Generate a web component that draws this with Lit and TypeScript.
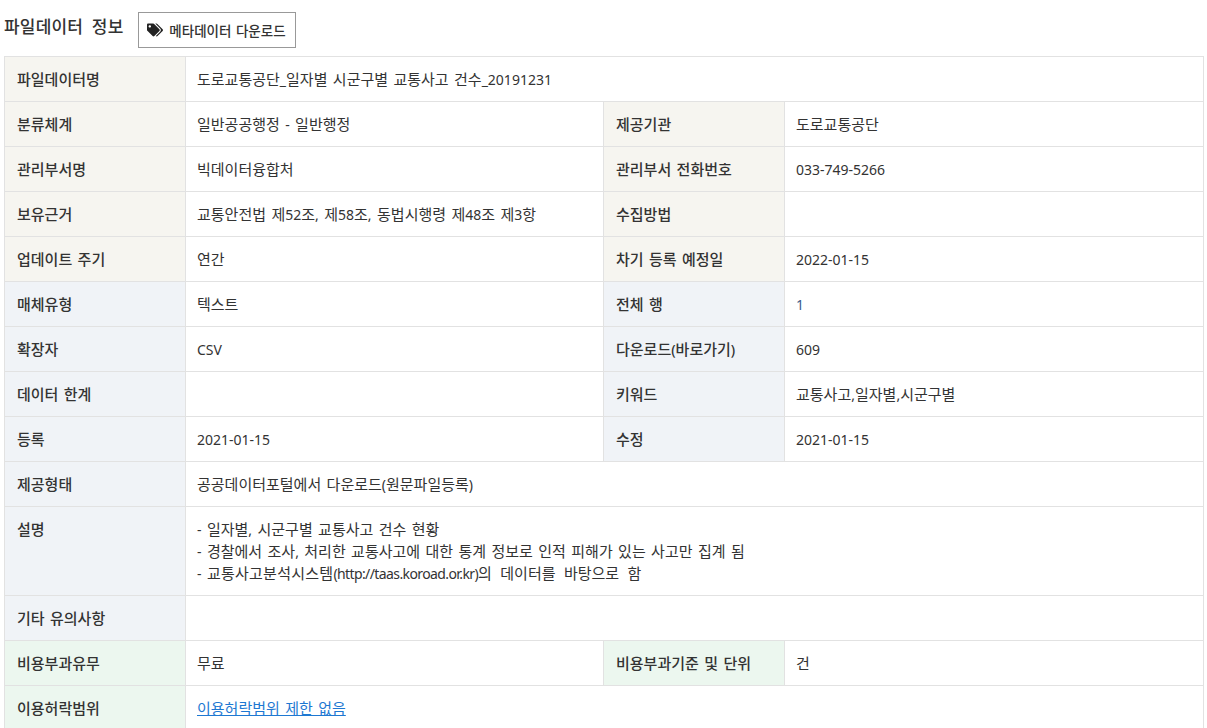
import { LitElement, html, css } from "lit";
import { customElement } from "lit/decorators.js";

type Cell = { k: string; v?: string; k2?: string; v2?: string; c: string; blue2?: boolean };

/* Korean glyphs run about 1px larger than the Latin ones in the reference, so Latin runs get their own span. */
const t = (s: string) =>
  s.split(/([A-Za-z0-9:\/._,()\-]+)/).map((p, i) => (i % 2 ? html`<span class="l">${p}</span>` : p));

@customElement("app-root")
export class AppRoot extends LitElement {
  static styles = css`
    :host { display: block; font-family: "Noto Sans", "Noto Sans CJK KR", sans-serif; color: #333; font-size: 15px; word-spacing: 1.5px; height: 728px; overflow: hidden; padding: 0 3px 0 4px; box-sizing: border-box; }
    .l { font-size: 14px; word-spacing: 0; line-height: 1; }
    .url { font-size: 14px; line-height: 1; letter-spacing: -0.6px; }
    .lead { letter-spacing: 0.25px; }
    .tail { word-spacing: 4.5px; }
    .head { display: flex; align-items: flex-start; height: 56px; box-sizing: border-box; }
    h3 { margin: 16px 14px 0 0; font-size: 17px; font-weight: 500; line-height: 22px; color: #333; letter-spacing: 0.2px; word-spacing: 4px; }
    .btn { margin-top: 12px; height: 36px; box-sizing: border-box; width: 158px; border: 1px solid #999; background: #fff; display: flex; align-items: center; justify-content: center; gap: 6px; font-size: 13.5px; word-spacing: 1px; color: #333; padding: 0; font-family: inherit; font-weight: 500; }
    .btn svg { width: 16px; height: 14px; flex: none; }
    table { width: 1199px; border-collapse: collapse; table-layout: fixed; }
    th, td { border: 1px solid #e2e2e2; height: 45px; box-sizing: border-box; text-align: left; font-weight: 400; line-height: 22px; vertical-align: middle; }
    th { padding: 0 12px; font-weight: 500; color: #333; }
    td { padding: 0 12px 0 11px; }
    .a { background: #f6f5f0; } .b { background: #f0f3f7; } .c { background: #ecf7ef; }
    .blue { color: #3c5a8c; }
    .top { vertical-align: top; padding-top: 11px; }
    .desc { padding-top: 11px; padding-bottom: 2px; vertical-align: top; height: 89px; }
    a { color: #1e78d2; text-decoration: underline; }
  `;
  rows: Cell[] = [
    { k: "분류체계", v: "일반공공행정 - 일반행정", k2: "제공기관", v2: "도로교통공단", c: "a" },
    { k: "관리부서명", v: "빅데이터융합처", k2: "관리부서 전화번호", v2: "033-749-5266", c: "a" },
    { k: "보유근거", v: "교통안전법 제52조, 제58조, 동법시행령 제48조 제3항", k2: "수집방법", v2: "", c: "a" },
    { k: "업데이트 주기", v: "연간", k2: "차기 등록 예정일", v2: "2022-01-15", c: "a" },
    { k: "매체유형", v: "텍스트", k2: "전체 행", v2: "1", c: "b", blue2: true },
    { k: "확장자", v: "CSV", k2: "다운로드(바로가기)", v2: "609", c: "b" },
    { k: "데이터 한계", v: "", k2: "키워드", v2: "교통사고,일자별,시군구별", c: "b" },
    { k: "등록", v: "2021-01-15", k2: "수정", v2: "2021-01-15", c: "b" },
  ];
  render() {
    return html`
      <div class="head">
        <h3>파일데이터 정보</h3>
        <button class="btn">
          <svg viewBox="0 0 640 512"><path fill="#222" d="M497.9 225.9L286.1 14.1A48 48 0 0 0 252.1 0H48C21.5 0 0 21.5 0 48v204.1a48 48 0 0 0 14.1 33.9l211.9 211.9c18.7 18.7 49.1 18.7 67.9 0l204.1-204.1c18.7-18.7 18.7-49.1 0-67.9zM112 160c-26.5 0-48-21.5-48-48s21.5-48 48-48 48 21.5 48 48-21.5 48-48 48zm513.9 133.8L421.8 497.9c-18.7 18.7-49.1 18.7-67.9 0l-.4-.4L527.6 323.5c17-17 26.4-39.6 26.4-63.6s-9.4-46.6-26.4-63.6L331.4 0h48.7a48 48 0 0 1 33.9 14.1l211.9 211.9c18.7 18.7 18.7 49.1 0 67.8z"/></svg>
          메타데이터 다운로드
        </button>
      </div>
      <table>
        <colgroup><col style="width:181px" /><col style="width:418px" /><col style="width:181px" /><col style="width:419px" /></colgroup>
        <tr><th class="a">파일데이터명</th><td colspan="3">${t("도로교통공단_일자별 시군구별 교통사고 건수_20191231")}</td></tr>
        ${this.rows.map((r) => html`<tr>
          <th class=${r.c}>${t(r.k)}</th><td>${t(r.v ?? "")}</td>
          <th class=${r.c}>${t(r.k2 ?? "")}</th><td class=${r.blue2 ? "blue" : ""}>${t(r.v2 ?? "")}</td>
        </tr>`)}
        <tr><th class="b">제공형태</th><td colspan="3">${t("공공데이터포털에서 다운로드(원문파일등록)")}</td></tr>
        <tr><th class="b top">설명</th><td colspan="3" class="desc">${t("- 일자별, 시군구별 교통사고 건수 현황")}<br />${t("- 경찰에서 조사, 처리한 교통사고에 대한 통계 정보로 인적 피해가 있는 사고만 집계 됨")}<br /><span class="l">-</span> <span class="lead">교통사고분석시스템</span><span class="url">(http://taas.koroad.or.kr)</span><span class="tail">의 데이터를 바탕으로 함</span></td></tr>
        <tr><th class="b">기타 유의사항</th><td colspan="3"></td></tr>
        <tr><th class="c">비용부과유무</th><td>무료</td><th class="c">비용부과기준 및 단위</th><td>건</td></tr>
        <tr><th class="c">이용허락범위</th><td colspan="3"><a href="#">이용허락범위 제한 없음</a></td></tr>
      </table>
    `;
  }
}
